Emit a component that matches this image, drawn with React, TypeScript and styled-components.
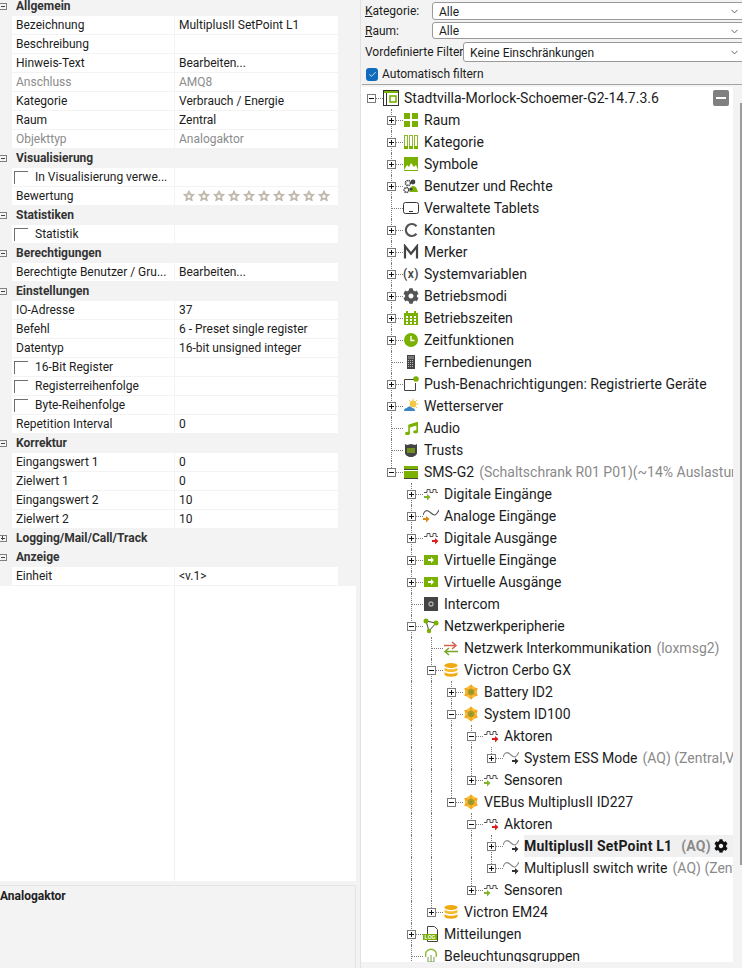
import React from "react";
import styled, { createGlobalStyle } from "styled-components";
import { FaCog, FaMusic } from "react-icons/fa";
import { ChevronDown, Check } from "lucide-react";

const Global = createGlobalStyle`
  html, body { margin: 0; padding: 0; background: #f3f3f3; }
  body { font-family: Roboto, "Noto Sans", sans-serif; overflow: hidden; }
`;

const Window = styled.div`
  width: 742px;
  height: 968px;
  display: flex;
  overflow: hidden;
  background: #f3f3f3;
  color: #1c1c1c;
`;

/* left pane */
const LeftPane = styled.div`
  width: 356px;
  height: 968px;
  flex: none;
  display: flex;
  flex-direction: column;
`;

const Grid = styled.div`
  margin-top: -3px;
  flex: none;
`;

const Section = styled.div`
  height: 19px;
  display: flex;
  align-items: center;
  font-size: 12px;
  font-weight: 700;
  color: #333;
  span:last-child {
    margin-top: -1px;
  }
`;

const SectionBox = styled.span`
  width: 7px;
  height: 7px;
  margin-right: 9px;
  flex: none;
  position: relative;
  border: 1px solid #808080;
  border-left: none;
  box-sizing: border-box;
  &::before {
    content: "";
    position: absolute;
    left: 1px;
    right: 1px;
    top: 2px;
    height: 1px;
    background: #444;
  }
`;

const SectionPlus = styled(SectionBox)`
  &::after {
    content: "";
    position: absolute;
    left: 2px;
    top: 0;
    bottom: 1px;
    width: 1px;
    background: #444;
  }
`;

const PropRow = styled.div`
  height: 19px;
  margin-left: 12px;
  width: 326px;
  box-sizing: border-box;
  display: flex;
  background: #fff;
  border-bottom: 1px solid #f3f3f3;
  font-size: 12px;
`;

const PropName = styled.div<{ $off?: boolean }>`
  width: 163px;
  flex: none;
  box-sizing: border-box;
  padding-left: 4px;
  display: flex;
  align-items: center;
  white-space: nowrap;
  border-right: 1px solid #f3f3f3;
  color: ${(p) => (p.$off ? "#8c8c8c" : "#1c1c1c")};
`;

const PropValue = styled.div<{ $off?: boolean }>`
  flex: 1;
  padding-left: 4px;
  display: flex;
  align-items: center;
  white-space: nowrap;
  color: ${(p) => (p.$off ? "#8c8c8c" : "#1c1c1c")};
`;

const CheckMark = styled.span`
  width: 14px;
  height: 13px;
  flex: none;
  margin-left: -2px;
  margin-right: 7px;
  box-sizing: border-box;
  border-left: 1px solid #6f6f6f;
  border-top: 1px solid #6f6f6f;
`;

const Stars = styled.div`
  display: flex;
  gap: 3px;
  margin-left: 4px;
`;

const EmptyGrid = styled.div`
  height: 295px;
  flex: none;
  background: #fff;
  display: flex;
`;

const EmptyCol = styled.div`
  width: 174px;
  border-right: 1px solid #f0f0f0;
`;

const InfoPanel = styled.div`
  margin-top: 4px;
  flex: 1;
  border-top: 1px solid #e4e4e4;
  border-right: 1px solid #e4e4e4;
  font-size: 12px;
  font-weight: 700;
  padding-top: 2px;
  line-height: 16px;
  color: #222;
`;

const Splitter = styled.div`
  width: 5px;
  flex: none;
  box-sizing: border-box;
  border-right: 1px solid #e2e2e2;
`;

/* right pane */
const RightPane = styled.div`
  flex: 1;
  min-width: 0;
  display: flex;
  flex-direction: column;
`;

const Filters = styled.div`
  height: 85px;
  flex: none;
  box-sizing: border-box;
  margin-left: 1px;
  padding-top: 2px;
  border-bottom: 1px solid #a3a3a3;
  font-size: 12px;
`;

const FilterRow = styled.div<{ $gap: number }>`
  display: flex;
  align-items: center;
  padding-left: 3px;
  margin-bottom: ${(p) => p.$gap}px;
`;

const FilterLabel = styled.label<{ $w: number }>`
  width: ${(p) => p.$w}px;
  flex: none;
  white-space: nowrap;
  u {
    text-decoration: underline;
  }
`;

const Select = styled.div<{ $h: number }>`
  flex: 1;
  height: ${(p) => p.$h}px;
  margin-right: -6px;
  box-sizing: border-box;
  display: flex;
  align-items: center;
  justify-content: space-between;
  padding: 1px 7px 0 6px;
  background: #fff;
  border: 1px solid #9a9a9a;
  border-radius: 3px;
  svg {
    color: #555;
  }
`;

const AutoRow = styled.div`
  display: flex;
  align-items: center;
  margin-top: 5px;
  padding-left: 4px;
  gap: 4px;
`;

const BlueCheck = styled.span`
  width: 12px;
  height: 13px;
  border-radius: 3px;
  background: #0f6cbd;
  display: flex;
  align-items: center;
  justify-content: center;
  color: #fff;
`;

const TreeArea = styled.div`
  position: relative;
  margin-top: 2px;
  height: 875px;
  flex: none;
  display: flex;
`;

const TreeList = styled.div`
  width: 372px;
  flex: none;
  background: #fff;
  overflow: hidden;
  font-size: 14px;
`;

const ScrollTrack = styled.div`
  flex: 1;
  display: flex;
  justify-content: flex-end;
  padding-top: 16px;
`;

const ScrollThumb = styled.div`
  width: 2px;
  height: 762px;
  background: #9c9c9c;
`;

const CollapseAll = styled.div`
  position: absolute;
  top: 3px;
  left: 352px;
  width: 16px;
  height: 16px;
  border-radius: 2px;
  background: #808080;
  display: flex;
  align-items: center;
  justify-content: center;
  &::before {
    content: "";
    width: 10px;
    height: 2px;
    background: #fff;
  }
`;

const Row = styled.div`
  height: 22px;
  display: flex;
  align-items: center;
  white-space: nowrap;
`;

const Indent = styled.span<{ $line: boolean }>`
  width: 20px;
  height: 22px;
  flex: none;
  position: relative;
  &::before {
    content: "";
    position: absolute;
    left: 10px;
    top: 0;
    bottom: 0;
    border-left: ${(p) => (p.$line ? "1px dotted #7a7a7a" : "none")};
  }
`;

const Elbow = styled.span<{ $v: "none" | "half" | "full" }>`
  width: 20px;
  height: 22px;
  flex: none;
  position: relative;
  display: flex;
  align-items: center;
  justify-content: center;
  &::before {
    content: "";
    position: absolute;
    left: 10px;
    top: 0;
    height: ${(p) => (p.$v === "full" ? "22px" : "11px")};
    border-left: ${(p) => (p.$v === "none" ? "none" : "1px dotted #7a7a7a")};
  }
  &::after {
    content: "";
    position: absolute;
    left: 11px;
    top: 11px;
    width: 11px;
    border-top: 1px dotted #7a7a7a;
  }
`;

const Expander = styled.span<{ $open: boolean }>`
  width: 9px;
  height: 9px;
  position: relative;
  z-index: 1;
  margin-left: 1px;
  margin-top: 1px;
  box-sizing: border-box;
  border: 1px solid #7a7a7a;
  background: #fff;
  &::before {
    content: "";
    position: absolute;
    left: 1px;
    right: 1px;
    top: 3px;
    height: 1px;
    background: #111;
  }
  &::after {
    content: "";
    position: absolute;
    display: ${(p) => (p.$open ? "none" : "block")};
    left: 3px;
    top: 1px;
    bottom: 1px;
    width: 1px;
    background: #111;
  }
`;

const IconSlot = styled.span`
  width: 16px;
  height: 16px;
  margin-left: 2px;
  flex: none;
  position: relative;
  z-index: 1;
  background: #fff;
  display: flex;
  align-items: center;
  justify-content: center;
  svg {
    display: block;
  }
`;

const Label = styled.span<{ $selected?: boolean }>`
  margin-left: 5px;
  height: 22px;
  line-height: 21px;
  display: flex;
  align-items: center;
  flex: ${(p) => (p.$selected ? "1" : "none")};
  font-weight: ${(p) => (p.$selected ? 700 : 400)};
  letter-spacing: ${(p) => (p.$selected ? "0.2px" : "0")};
  background: ${(p) => (p.$selected ? "#f0f0f0" : "transparent")};
`;

const Note = styled.span<{ $selected?: boolean }>`
  margin-left: ${(p) => (p.$selected ? 9 : 5)}px;
  color: #8a8a8a;
`;

const RowGear = styled.span`
  margin-left: auto;
  margin-right: 5px;
  display: flex;
  color: #111;
`;

const G = "#7ab000";

const Wave = () => <path d="M1 6.500h3v-3h3v3h3v-3h3v3h2" fill="none" stroke="#444" strokeWidth=".9" />;
const Sine = ({ c = "#444" }: { c?: string }) => (
  <path d="M0 7C2 1 5 2 8 5s5 3 8-3" fill="none" stroke={c} strokeWidth="1.1" />
);
const Arrow = ({ x, c }: { x: number; c: string }) => (
  <path d={`M${x} 10h3V8l3.500 3-3.500 3.500v-2.500h-3z`} fill={c} />
);
const Flower = () => (
  <g>
    {[0, 60, 120, 180, 240, 300].map((a) => (
      <path key={a} d="M8 8L5.200 3.200 8 .3l2.800 2.900z" fill="#f5a81c" transform={`rotate(${a} 8 8)`} />
    ))}
    {[30, 90, 150, 210, 270, 330].map((a) => (
      <ellipse key={a} cx="8" cy="4" rx="1.600" ry="2.200" fill="#fbbf3a" transform={`rotate(${a} 8 8)`} />
    ))}
    <circle cx="8" cy="8" r="3.600" fill="#c79a22" />
    <path d="M6 6l4 4M10 6l-4 4M8 5v6M5 8h6" stroke="#7a9a30" strokeWidth=".8" />
  </g>
);

const icons: Record<string, React.ReactNode> = {
  root: (
    <>
      <rect x=".5" y=".5" width="15" height="15" fill="#fff" stroke="#333" />
      <rect x="1" y="1" width="14" height="2" fill={G} />
      <rect x="3" y="3" width="1" height="12" fill="#333" />
      <rect x="7" y="6" width="6" height="6" fill="none" stroke={G} strokeWidth="1.600" />
    </>
  ),
  room: (
    <>
      <rect x="1" y="1" width="6" height="6" fill={G} />
      <rect x="9" y="1" width="6" height="6" fill={G} />
      <rect x="1" y="9" width="6" height="6" fill={G} />
      <rect x="9" y="9" width="6" height="6" fill={G} />
    </>
  ),
  cat: (
    <>
      {[1, 6, 11].map((x) => (
        <g key={x}>
          <rect x={x + 0.5} y="1.500" width="3" height="13" fill="none" stroke="#8cb92e" />
          <rect x={x} y="12" width="4" height="3" fill={G} />
        </g>
      ))}
    </>
  ),
  sym: (
    <>
      <rect x="1" y="1" width="14" height="14" fill={G} />
      <path d="M1 14l3-5 2 2 2-4 3 4 2-2 2 5z" fill="#fff" />
    </>
  ),
  users: (
    <>
      <circle cx="5" cy="5" r="2.500" fill="none" stroke="#444" strokeWidth="1.600" strokeDasharray="1.400 .6" />
      <circle cx="3.500" cy="12" r="2.400" fill="none" stroke="#444" strokeWidth="1.600" strokeDasharray="1.400 .6" />
      <circle cx="10" cy="4" r="2.400" fill="#444" />
      <path d="M7 14c0-5 2-6 3-6 3 0 4 3 5 6z" fill={G} />
      <circle cx="8" cy="11" r="1.600" fill="#444" />
    </>
  ),
  tablet: (
    <>
      <rect x=".5" y="2.500" width="15" height="11" rx="2" fill="none" stroke="#333" />
      <rect x="6" y="11" width="4" height="1" fill="#333" />
    </>
  ),
  c: <path d="M13.500 4.200A6 6 0 1 0 13.500 11.800" fill="none" stroke="#555" strokeWidth="2.200" />,
  m: <path d="M2 14.500V2.200l6 7.600 6-7.600v12.300" fill="none" stroke="#444" strokeWidth="2.200" />,
  x: (
    <text x="8" y="12" textAnchor="middle" fontSize="12" fontWeight="600" fontFamily="Roboto" fill="#444" letterSpacing=".5">
      (x)
    </text>
  ),
  cal: (
    <>
      <rect x="1" y="3" width="14" height="12" fill={G} />
      <rect x="3" y="1" width="2" height="3" fill={G} />
      <rect x="11" y="1" width="2" height="3" fill={G} />
      {[6, 9, 12].map((y) =>
        [3, 7, 11].map((x) => <rect key={x + "-" + y} x={x} y={y} width="2" height="2" fill="#fff" />),
      )}
    </>
  ),
  clock: (
    <>
      <circle cx="8" cy="8" r="7" fill={G} />
      <path d="M8 4v4.500h3.500" fill="none" stroke="#fff" strokeWidth="1.400" />
    </>
  ),
  remote: (
    <>
      <rect x="4" y="1" width="8" height="14" fill="#444" />
      <rect x="5" y="2" width="6" height="3" fill="#777" />
      {[6, 8, 10, 12].map((y) => (
        <path key={y} d={`M5 ${y + 0.5}h6`} stroke="#bbb" strokeDasharray="1 1" />
      ))}
    </>
  ),
  push: (
    <>
      <path d="M11 3.500H1.500v11h11V7" fill="none" stroke="#444" />
      <circle cx="13" cy="3" r="2.800" fill={G} />
    </>
  ),
  weather: (
    <>
      <circle cx="10" cy="6" r="3.400" fill="#f4c84a" />
      <path d="M10 .5v2M15.500 6h-2M14 2l-1.500 1.500M6 2l1.500 1.500M14 10l-1.500-1.500" stroke="#f4c84a" />
      <path d="M1 13c0-2 1-3 3-3 1-2 4-2 5 0 2 0 3 1 3 3z" fill="#3d86c6" />
    </>
  ),
  trust: (
    <>
      <path d="M2 2l2 1 4-1 4 1 2-1v9c0 2-3 4-6 4s-6-2-6-4z" fill="#444" />
      <rect x="4" y="6" width="8" height="5" fill="#6f8f1f" />
    </>
  ),
  sms: (
    <>
      <rect x="1" y="2" width="14" height="3" fill={G} />
      <rect x="1" y="5" width="14" height="1" fill="#444" />
      <rect x="1" y="7" width="14" height="7" fill={G} />
      <rect x="1" y="14" width="14" height="1" fill="#444" />
    </>
  ),
  digIn: (
    <>
      <Wave />
      <Arrow x={1} c="#7fb52b" />
    </>
  ),
  digOut: (
    <>
      <Wave />
      <Arrow x={9} c="#d9201f" />
    </>
  ),
  anaIn: (
    <>
      <Sine c="#555" />
      <Arrow x={0} c="#d98a10" />
    </>
  ),
  anaOut: (
    <>
      <Sine c="#888" />
      <Arrow x={9} c="#333" />
    </>
  ),
  virt: (
    <>
      <rect x="1" y="3" width="14" height="10" fill={G} />
      <path d="M5 7h3V5l3 3-3 3V9H5z" fill="#fff" />
    </>
  ),
  intercom: (
    <>
      <rect x="1" y="1" width="14" height="14" fill="#444" />
      <circle cx="8" cy="8" r="2" fill="none" stroke="#aaa" strokeWidth="1.300" />
    </>
  ),
  net: (
    <>
      <path d="M3 3l10 2M3 3l3 10M13 5l-7 8" stroke="#444" fill="none" />
      <circle cx="3" cy="3" r="2.500" fill={G} />
      <circle cx="13" cy="5" r="2.500" fill={G} />
      <circle cx="6" cy="13" r="2.200" fill={G} />
    </>
  ),
  swap: (
    <>
      <path d="M1 5.500h11M9 2l4 3.500L9 9" fill="none" stroke="#d4604f" strokeWidth="1.500" />
      <path d="M15 11.500H3M6 8l-4 3.500L6 15" fill="none" stroke="#7aa52a" strokeWidth="1.500" />
    </>
  ),
  db: (
    <>
      <ellipse cx="8" cy="3.500" rx="6.500" ry="2.500" fill="#f0a90f" />
      <path d="M1.500 5.500c1 2.400 12 2.400 13 0v2.800c-1 2.400-12 2.400-13 0z" fill="#f5bc2e" />
      <path d="M1.500 10c1 2.400 12 2.400 13 0v2.500c-1 3-12 3-13 0z" fill="#f0a90f" />
    </>
  ),
  flower: <Flower />,
  log: (
    <>
      <path d="M4.500 8V.5h7l3 3V15.500h-10v-2" fill="#fff" stroke="#444" />
      <rect x="0" y="8" width="14" height="6" fill={G} />
      <text x="7" y="13" textAnchor="middle" fontSize="5" fontWeight="700" fontFamily="Liberation Sans" fill="#fff">
        LOG
      </text>
    </>
  ),
  light: (
    <>
      <path d="M3 9a5.500 5.500 0 1 1 10 0" fill="none" stroke="#8cb92e" strokeWidth="1.400" />
      <path d="M5 9v5M8 7v7M11 9v5M5 14h6" fill="none" stroke="#7a9a50" />
    </>
  ),
};

const Icon = ({ name }: { name: string }) => {
  if (name === "gear") return <FaCog size={16} color="#555" />;
  if (name === "music") return <FaMusic size={13} color={G} />;
  return (
    <svg width="16" height="16" viewBox="0 0 16 16">
      {icons[name]}
    </svg>
  );
};

const StarIcon = () => (
  <svg width="12" height="12" viewBox="0 0 12 12">
    <path d="M6 .5l1.600 3.600 3.900.4-2.900 2.600.8 3.900L6 9l-3.400 2 .8-3.900L.5 4.500l3.900-.4z" fill="#c2bcae" stroke="#a9a392" strokeWidth=".5" />
    <path d="M6 4l.7 1.500 1.600.2-1.200 1 .4 1.600L6 7.500l-1.500.8.4-1.600-1.200-1 1.600-.2z" fill="#fff" />
  </svg>
);

type Node = {
  label: string;
  icon: string;
  note?: string;
  leaf?: boolean;
  selected?: boolean;
  more?: boolean;
  children?: Node[];
};

const tree: Node = {
  label: "Stadtvilla-Morlock-Schoemer-G2-14.7.3.6",
  icon: "root",
  children: [
    { label: "Raum", icon: "room" },
    { label: "Kategorie", icon: "cat" },
    { label: "Symbole", icon: "sym" },
    { label: "Benutzer und Rechte", icon: "users" },
    { label: "Verwaltete Tablets", icon: "tablet", leaf: true },
    { label: "Konstanten", icon: "c" },
    { label: "Merker", icon: "m" },
    { label: "Systemvariablen", icon: "x" },
    { label: "Betriebsmodi", icon: "gear" },
    { label: "Betriebszeiten", icon: "cal" },
    { label: "Zeitfunktionen", icon: "clock" },
    { label: "Fernbedienungen", icon: "remote", leaf: true },
    { label: "Push-Benachrichtigungen: Registrierte Geräte", icon: "push" },
    { label: "Wetterserver", icon: "weather" },
    { label: "Audio", icon: "music", leaf: true },
    { label: "Trusts", icon: "trust", leaf: true },
    {
      label: "SMS-G2",
      icon: "sms",
      note: "(Schaltschrank R01 P01)(~14% Auslastung)",
      children: [
        { label: "Digitale Eingänge", icon: "digIn" },
        { label: "Analoge Eingänge", icon: "anaIn" },
        { label: "Digitale Ausgänge", icon: "digOut" },
        { label: "Virtuelle Eingänge", icon: "virt" },
        { label: "Virtuelle Ausgänge", icon: "virt" },
        { label: "Intercom", icon: "intercom", leaf: true },
        {
          label: "Netzwerkperipherie",
          icon: "net",
          children: [
            { label: "Netzwerk Interkommunikation", icon: "swap", note: "(loxmsg2)", leaf: true },
            {
              label: "Victron Cerbo GX",
              icon: "db",
              children: [
                { label: "Battery ID2", icon: "flower" },
                {
                  label: "System ID100",
                  icon: "flower",
                  children: [
                    {
                      label: "Aktoren",
                      icon: "digOut",
                      children: [
                        { label: "System ESS Mode", icon: "anaOut", note: "(AQ) (Zentral,Verbrauch / Energie)" },
                      ],
                    },
                    { label: "Sensoren", icon: "digIn" },
                  ],
                },
                {
                  label: "VEBus MultiplusII ID227",
                  icon: "flower",
                  children: [
                    {
                      label: "Aktoren",
                      icon: "digOut",
                      children: [
                        { label: "MultiplusII SetPoint L1", icon: "anaOut", note: "(AQ)", selected: true },
                        { label: "MultiplusII switch write", icon: "anaOut", note: "(AQ) (Zentral,Verbrauch)" },
                      ],
                    },
                    { label: "Sensoren", icon: "digIn" },
                  ],
                },
              ],
            },
            { label: "Victron EM24", icon: "db" },
          ],
        },
        { label: "Mitteilungen", icon: "log" },
        { label: "Beleuchtungsgruppen", icon: "light", leaf: true, more: true },
      ],
    },
  ],
};

const renderNode = (node: Node, guides: boolean[], last: boolean, isRoot: boolean): React.ReactNode[] => {
  const kids = node.children ?? [];
  const open = kids.length > 0;
  const row = (
    <Row key={node.label + guides.length + node.icon + String(last)}>
      {guides.map((g, i) => (
        <Indent key={i} $line={g} />
      ))}
      <Elbow $v={isRoot ? "none" : last ? "half" : "full"}>{!node.leaf && <Expander $open={open} />}</Elbow>
      <IconSlot>
        <Icon name={node.icon} />
      </IconSlot>
      <Label $selected={node.selected}>
        {node.label}
        {node.note && <Note $selected={node.selected}>{node.note}</Note>}
        {node.selected && (
          <RowGear>
            <FaCog size={14} />
          </RowGear>
        )}
      </Label>
    </Row>
  );
  const next = [...guides, !last];
  const rest = kids.flatMap((k, i) => renderNode(k, next, i === kids.length - 1 && !k.more, false));
  return [row, ...rest];
};

type Prop =
  | { kind: "s"; name: string; plus?: boolean }
  | { kind: "p"; name: string; value?: string; off?: boolean }
  | { kind: "c"; name: string }
  | { kind: "stars"; name: string };

const props: Prop[] = [
  { kind: "s", name: "Allgemein" },
  { kind: "p", name: "Bezeichnung", value: "MultiplusII SetPoint L1" },
  { kind: "p", name: "Beschreibung" },
  { kind: "p", name: "Hinweis-Text", value: "Bearbeiten..." },
  { kind: "p", name: "Anschluss", value: "AMQ8", off: true },
  { kind: "p", name: "Kategorie", value: "Verbrauch / Energie" },
  { kind: "p", name: "Raum", value: "Zentral" },
  { kind: "p", name: "Objekttyp", value: "Analogaktor", off: true },
  { kind: "s", name: "Visualisierung" },
  { kind: "c", name: "In Visualisierung verwe..." },
  { kind: "stars", name: "Bewertung" },
  { kind: "s", name: "Statistiken" },
  { kind: "c", name: "Statistik" },
  { kind: "s", name: "Berechtigungen" },
  { kind: "p", name: "Berechtigte Benutzer / Gru...", value: "Bearbeiten..." },
  { kind: "s", name: "Einstellungen" },
  { kind: "p", name: "IO-Adresse", value: "37" },
  { kind: "p", name: "Befehl", value: "6 - Preset single register" },
  { kind: "p", name: "Datentyp", value: "16-bit unsigned integer" },
  { kind: "c", name: "16-Bit Register" },
  { kind: "c", name: "Registerreihenfolge" },
  { kind: "c", name: "Byte-Reihenfolge" },
  { kind: "p", name: "Repetition Interval", value: "0" },
  { kind: "s", name: "Korrektur" },
  { kind: "p", name: "Eingangswert 1", value: "0" },
  { kind: "p", name: "Zielwert 1", value: "0" },
  { kind: "p", name: "Eingangswert 2", value: "10" },
  { kind: "p", name: "Zielwert 2", value: "10" },
  { kind: "s", name: "Logging/Mail/Call/Track", plus: true },
  { kind: "s", name: "Anzeige" },
  { kind: "p", name: "Einheit", value: "<v.1>" },
];

const renderProp = (p: Prop) => {
  if (p.kind === "s") {
    return (
      <Section key={p.name}>
        {p.plus ? <SectionPlus /> : <SectionBox />}
        <span>{p.name}</span>
      </Section>
    );
  }
  if (p.kind === "c") {
    return (
      <PropRow key={p.name}>
        <PropName>
          <CheckMark />
          {p.name}
        </PropName>
        <PropValue />
      </PropRow>
    );
  }
  if (p.kind === "stars") {
    return (
      <PropRow key={p.name}>
        <PropName>{p.name}</PropName>
        <PropValue>
          <Stars>
            {Array.from({ length: 10 }, (_, i) => (
              <StarIcon key={i} />
            ))}
          </Stars>
        </PropValue>
      </PropRow>
    );
  }
  return (
    <PropRow key={p.name}>
      <PropName $off={p.off}>{p.name}</PropName>
      <PropValue $off={p.off}>{p.value}</PropValue>
    </PropRow>
  );
};

export default function App() {
  return (
    <Window>
      <Global />
      <LeftPane>
        <Grid>{props.map(renderProp)}</Grid>
        <EmptyGrid>
          <EmptyCol />
        </EmptyGrid>
        <InfoPanel>Analogaktor</InfoPanel>
      </LeftPane>
      <Splitter />
      <RightPane>
        <Filters>
          <FilterRow $gap={2}>
            <FilterLabel $w={67}>
              <u>K</u>ategorie:
            </FilterLabel>
            <Select $h={18}>
              Alle
              <ChevronDown size={11} />
            </Select>
          </FilterRow>
          <FilterRow $gap={3}>
            <FilterLabel $w={67}>
              <u>R</u>aum:
            </FilterLabel>
            <Select $h={17}>
              Alle
              <ChevronDown size={11} />
            </Select>
          </FilterRow>
          <FilterRow $gap={2}>
            <FilterLabel $w={98}>Vordefinierte Filter</FilterLabel>
            <Select $h={20}>
              Keine Einschränkungen
              <ChevronDown size={11} />
            </Select>
          </FilterRow>
          <AutoRow>
            <BlueCheck>
              <Check size={9} strokeWidth={2} />
            </BlueCheck>
            Automatisch filtern
          </AutoRow>
        </Filters>
        <TreeArea>
          <TreeList>{renderNode(tree, [], true, true)}</TreeList>
          <ScrollTrack>
            <ScrollThumb />
          </ScrollTrack>
          <CollapseAll />
        </TreeArea>
      </RightPane>
    </Window>
  );
}
